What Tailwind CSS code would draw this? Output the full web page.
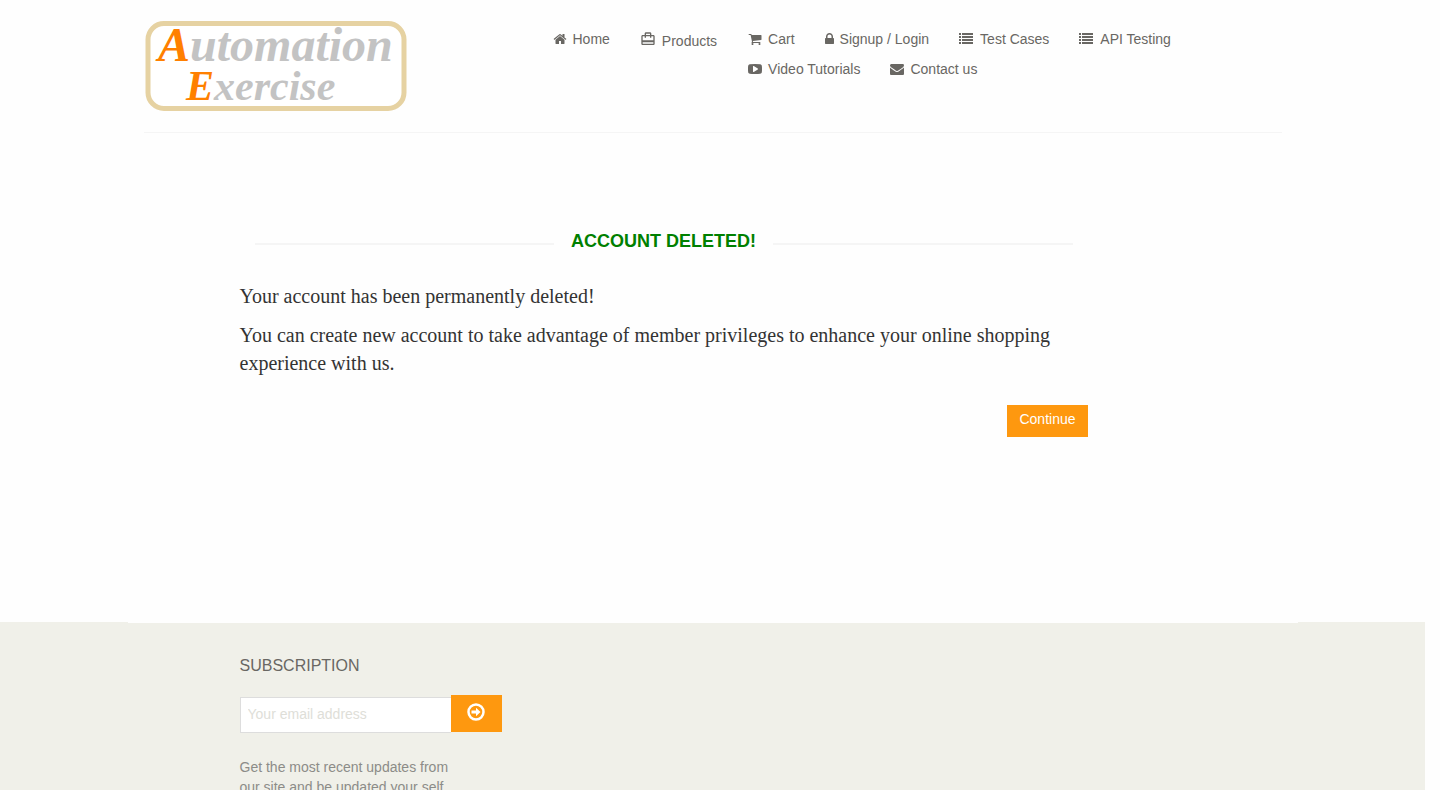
<!DOCTYPE html>
<html lang="en">
<head>
<meta charset="utf-8">
<meta name="viewport" content="width=device-width, initial-scale=1">
<title>Automation Exercise - Account Deleted</title>
<script src="https://cdn.jsdelivr.net/npm/@tailwindcss/browser@4"></script>
</head>
<body class="h-screen overflow-hidden bg-[#fefefe] pr-[15px] font-['Liberation_Sans',Arial,sans-serif] text-sm text-[#696763]">
<header class="mx-auto max-w-[1170px] px-4">
  <div class="flex items-start border-b border-[#f5f5f5] pt-5 pb-5">
    <a href="#" aria-label="Automation Exercise" class="block w-[264px] shrink-0">
      <svg class="block h-[92px] w-[264px]" viewBox="0 0 264 92">
        <rect x="4" y="3.500" width="256" height="85" rx="16" fill="#fff" stroke="#e6d2a2" stroke-width="5"/>
        <g font-family="Liberation Serif, serif" font-style="italic" font-weight="700" fill="#c3c3c3">
          <text x="14" y="41" font-size="48"><tspan fill="#ff8000">A</tspan>utomation</text>
          <text x="42" y="80" font-size="42"><tspan fill="#ff8000">E</tspan>xercise</text>
        </g>
      </svg>
    </a>
    <nav class="ml-auto w-[729px]" aria-label="Main">
      <ul class="flex items-start leading-5">
        <li class="mt-[9px] mr-[30px]"><a href="#" class="flex items-center gap-1.5"><svg class="size-3.5" viewBox="0 0 1792 1792" fill="currentColor"><path d="M1472 992v480q0 26-19 45t-45 19h-384v-384h-256v384h-384q-26 0-45-19t-19-45v-480q0-1 .5-3t.5-3l575-474 575 474q1 2 1 6zm223-69l-62 74q-8 9-21 11h-3q-13 0-21-7l-692-577-692 577q-12 8-24 7-13-2-21-11l-62-74q-8-10-7-23.500t11-21.500l719-599q32-26 76-26t76 26l244 204v-195q0-14 9-23t23-9h192q14 0 23 9t9 23v408l219 182q10 8 11 21.500t-7 23.500z"/></svg>Home</a></li>
        <li class="mt-[11px] mr-[31px]"><a href="#" class="flex items-start gap-1.5"><svg class="size-4" viewBox="0 0 24 24" fill="currentColor"><path d="M20 6h-3V4c0-1.110-.89-2-2-2H9c-1.110 0-2 .89-2 2v2H4c-1.110 0-2 .89-2 2v11c0 1.110.89 2 2 2h16c1.110 0 2-.89 2-2V8c0-1.110-.89-2-2-2zM9 4h6v2H9V4zm11 15H4v-2h16v2zm0-5H4V8h3v2h2V8h6v2h2V8h3v6z"/></svg>Products</a></li>
        <li class="mt-[9px] flex-1">
          <ul class="flex flex-wrap gap-x-[30px] gap-y-2.5">
            <li><a href="#" class="flex items-center gap-1.5"><svg class="size-3.5" viewBox="0 0 1792 1792" fill="currentColor"><path d="M704 1536q0 52-38 90t-90 38-90-38-38-90 38-90 90-38 90 38 38 90zm896 0q0 52-38 90t-90 38-90-38-38-90 38-90 90-38 90 38 38 90zm128-1088v512q0 24-16.500 42.500t-40.500 21.500l-1044 122q13 60 13 70 0 16-24 64h920q26 0 45 19t19 45-19 45-45 19h-1024q-26 0-45-19t-19-45q0-11 8-31.500t16-36 21.500-40 15.500-29.500l-177-823h-204q-26 0-45-19t-19-45 19-45 45-19h256q16 0 28.500 6.500t19.500 15.500 13 24.500 8 26 5.500 29.500 4.500 26h1201q26 0 45 19t19 45z"/></svg>Cart</a></li>
            <li><a href="#" class="flex items-center gap-1.5"><svg class="h-3.5 w-[9px]" viewBox="320 0 1152 1792" fill="currentColor"><path d="M640 768h512v-192q0-106-75-181t-181-75-181 75-75 181v192zm832 96v576q0 40-28 68t-68 28h-960q-40 0-68-28t-28-68v-576q0-40 28-68t68-28h32v-192q0-184 132-316t316-132 316 132 132 316v192h32q40 0 68 28t28 68z"/></svg>Signup / Login</a></li>
            <li><a href="#" class="flex items-center gap-[7px]"><svg class="size-3.5" viewBox="0 0 14 14" fill="currentColor"><path d="M0 1h2v2H0zM0 4h2v2H0zM0 7h2v2H0zM0 10h2v2H0zM3 1h11v2H3zM3 4h11v2H3zM3 7h11v2H3zM3 10h11v2H3z"/></svg>Test Cases</a></li>
            <li><a href="#" class="flex items-center gap-[7px]"><svg class="size-3.5" viewBox="0 0 14 14" fill="currentColor"><path d="M0 1h2v2H0zM0 4h2v2H0zM0 7h2v2H0zM0 10h2v2H0zM3 1h11v2H3zM3 4h11v2H3zM3 7h11v2H3zM3 10h11v2H3z"/></svg>API Testing</a></li>
            <li><a href="#" class="flex items-center gap-1.5"><svg class="size-3.5" viewBox="0 0 1792 1792" fill="currentColor"><path d="M1280 896q0-37-30-54l-512-320q-31-20-65-2-33 18-33 56v640q0 38 33 56 16 8 31 8 20 0 34-10l512-320q30-17 30-54zm512 0q0 96-1 150t-8.500 136.500-22.500 147.500q-16 73-69 123t-124 58q-222 25-671 25t-671-25q-71-8-124.500-58t-69.500-123q-14-65-21.500-147.500t-8.500-136.500-1-150 1-150 8.500-136.500 22.500-147.500q16-73 69-123t124-58q222-25 671-25t671 25q71 8 124.500 58t69.500 123q14 65 21.500 147.500t8.500 136.500 1 150z"/></svg>Video Tutorials</a></li>
            <li><a href="#" class="flex items-center gap-1.5"><svg class="size-3.5" viewBox="0 0 1792 1792" fill="currentColor"><path d="M1792 710v794q0 66-47 113t-113 47h-1472q-66 0-113-47t-47-113v-794q44 49 101 87 362 246 497 345 57 42 92.500 65.500t94.500 48 110 24.500h2q51 0 110-24.500t94.500-48 92.500-65.500q170-123 498-345 57-39 100-87zm0-294q0 79-49 151t-122 123q-376 261-468 325-10 7-42.500 31t-54 38.500-52 32.500-57.500 27-50 9h-2q-23 0-50-9t-57.500-27-52-32.500-54-38.500-42.500-31q-91-64-262-182.500t-205-142.500q-62-42-117-115.500t-55-136.500q0-78 41.500-130t118.500-52h1472q65 0 112.500 47t47.500 113z"/></svg>Contact us</a></li>
          </ul>
        </li>
      </ul>
    </nav>
  </div>
</header>

<main class="relative z-10 mx-auto max-w-[1170px] bg-[#fefefe] pt-24 pb-[186px] pl-28">
  <div class="max-w-[848px]">
    <h2 class="mr-[15px] ml-[15px] flex items-center gap-[17px] text-lg leading-6 font-bold text-[#008000]">
      <span class="mt-1.5 h-0.5 flex-1 bg-[#f5f5f5]"></span>
      ACCOUNT DELETED!
      <span class="mt-1.5 h-0.5 flex-1 bg-[#f5f5f5]"></span>
    </h2>
    <div class="mt-[29px] font-['Liberation_Serif','Times_New_Roman',serif] text-[20px] leading-7 text-[#333]">
      <p>Your account has been permanently deleted!</p>
      <p class="mt-[11px]">You can create new account to take advantage of member privileges to enhance your online shopping experience with us.</p>
    </div>
    <div class="mt-7 flex justify-end">
      <a href="#" class="bg-[#fe980f] px-3 pt-1 pb-2 leading-5 text-white">Continue</a>
    </div>
  </div>
</main>

<footer class="-mt-px bg-[#f0f0e9]">
  <div class="mx-auto max-w-[1170px] pt-8 pl-28">
    <h2 class="text-base leading-6 text-[#696763]">SUBSCRIPTION</h2>
    <form class="mt-[17px] flex items-start">
      <input type="email" aria-label="Your email address" placeholder="Your email address" class="mt-0.5 h-9 w-[211px] border border-r-0 border-[#ddd] bg-white px-[7px] pb-0.5 text-sm outline-none placeholder:text-[#deded8]">
      <button type="button" aria-label="Subscribe" class="flex h-[37px] w-[51px] items-start justify-center bg-[#fe980f] pt-2 text-white">
        <svg class="size-[18px]" viewBox="0 0 18 18"><circle cx="9" cy="9" r="7.500" fill="none" stroke="currentColor" stroke-width="2.500"/><path d="M4.500 7.500H9V4.800L13.500 9 9 13.200V10.500H4.500Z" fill="currentColor"/></svg>
      </button>
    </form>
    <p class="mt-6 w-[230px] leading-5 text-[#8c8c88]">Get the most recent updates from<br>our site and be updated your self</p>
  </div>
</footer>
</body>
</html>
